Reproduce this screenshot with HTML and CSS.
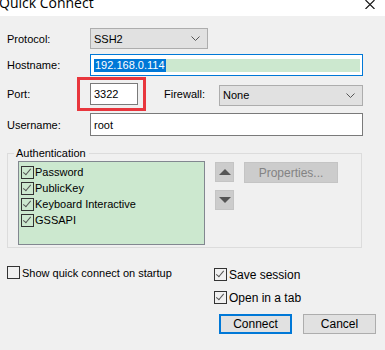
FILE: index.html
```html
<!DOCTYPE html>
<html lang="en">
<head>
    <meta charset="UTF-8">
    <title>Quick Connect</title>
    <link rel="stylesheet" href="styles.css">
</head>
<body>
    <div class="dialog">
        <div class="titlebar">
            <span class="title">Quick Connect</span>
            <svg class="close" width="10" height="9" viewBox="0 0 10 9">
                <path d="M0.5 0 L9.5 9 M9.5 0 L0.5 9" stroke="#111" stroke-width="1.1" fill="none"/>
            </svg>
        </div>

        <div class="form">
            <div class="row row-protocol">
                <label class="lbl">Protocol:</label>
                <div class="select select-protocol">
                    <span>SSH2</span>
                    <svg class="chev" width="9" height="5" viewBox="0 0 9 5"><path d="M0.5 0.5 L4.5 4.5 L8.5 0.5" stroke="#555" fill="none"/></svg>
                </div>
            </div>

            <div class="row row-host">
                <label class="lbl">Hostname:</label>
                <div class="input input-focus">
                    <span class="sel-text">192.168.0.114</span>
                    <span class="sel-fill"></span>
                </div>
            </div>

            <div class="row row-port">
                <label class="lbl">Port:</label>
                <div class="port-wrap">
                    <div class="input input-port">3322</div>
                    <div class="mark"></div>
                </div>
                <label class="lbl-fw">Firewall:</label>
                <div class="select select-fw">
                    <span>None</span>
                    <svg class="chev" width="9" height="5" viewBox="0 0 9 5"><path d="M0.5 0.5 L4.5 4.5 L8.5 0.5" stroke="#555" fill="none"/></svg>
                </div>
            </div>

            <div class="row row-user">
                <label class="lbl">Username:</label>
                <div class="input input-user">root</div>
            </div>
        </div>

        <fieldset class="auth">
            <legend>Authentication</legend>
            <div class="auth-body">
                <ul class="auth-list">
                    <li><span class="cb on"></span>Password</li>
                    <li><span class="cb on"></span>PublicKey</li>
                    <li><span class="cb on"></span>Keyboard Interactive</li>
                    <li><span class="cb on"></span>GSSAPI</li>
                </ul>
                <div class="arrows">
                    <div class="arrow-btn"><svg width="12" height="6" viewBox="0 0 12 6"><path d="M0 6 L6 0 L12 6 Z" fill="#555"/></svg></div>
                    <div class="arrow-btn"><svg width="12" height="6" viewBox="0 0 12 6"><path d="M0 0 L6 6 L12 0 Z" fill="#555"/></svg></div>
                </div>
                <div class="btn btn-disabled">Properties...</div>
            </div>
        </fieldset>

        <div class="bottom">
            <div class="check check-startup"><span class="cb"></span>Show quick connect on startup</div>
            <div class="right-col">
                <div class="check"><span class="cb on"></span>Save session</div>
                <div class="check check-tab"><span class="cb on"></span>Open in a tab</div>
                <div class="buttons">
                    <div class="btn btn-default">Connect</div>
                    <div class="btn">Cancel</div>
                </div>
            </div>
        </div>
    </div>
</body>
</html>
```

FILE: styles.css
```css
body {
    margin: 0;
    background: #f0f0f0;
    font-family: 'Liberation Sans', Arial, sans-serif;
    font-size: 11px;
    color: #000;
}

.dialog {
    width: 385px;
    height: 350px;
    overflow: hidden;
}

.titlebar {
    height: 16px;
    background: #fff;
    display: flex;
    justify-content: space-between;
    overflow: hidden;
}

.title {
    font-family: 'Open Sans', sans-serif;
    font-size: 14px;
    line-height: 15px;
    margin-top: -5px;
    margin-left: -1px;
}

.close {
    margin-right: 10px;
}

.form {
    padding: 12px 0 0 7px;
}

.row {
    display: flex;
    align-items: center;
}

.lbl {
    width: 83px;
}

.select {
    height: 21px;
    box-sizing: border-box;
    background: #e1e1e1;
    border: 1px solid #adadad;
    display: flex;
    align-items: center;
    justify-content: space-between;
    padding: 0 7px 0 3px;
}

.select-protocol {
    width: 118px;
}

.input {
    box-sizing: border-box;
    background: #fff;
    border: 1px solid #7a7a7a;
    display: flex;
    align-items: center;
    padding: 0 3px;
}

.row-host {
    margin-top: 5px;
}

.input-focus {
    width: 273px;
    height: 22px;
    border-color: #0078d7;
    padding: 0 2px 0 3px;
}

.sel-text {
    background: #0078d7;
    color: #fff;
    height: 13px;
    line-height: 13px;
    padding: 0 1px;
}

.sel-fill {
    flex: 1;
    height: 13px;
    background: #cce8cf;
}

.row-port {
    margin-top: 7px;
    height: 22px;
}

.port-wrap {
    position: relative;
    width: 48px;
    height: 22px;
}

.input-port {
    width: 48px;
    height: 22px;
}

/* red annotation box around the port field */
.mark {
    position: absolute;
    left: -13px;
    top: -6px;
    width: 63px;
    height: 28px;
    border: 3px solid #e8363d;
}

.lbl-fw {
    margin-left: 26px;
    width: 55px;
}

.select-fw {
    width: 144px;
    margin-top: 2px;
}

.row-user {
    margin-top: 8px;
}

.input-user {
    width: 273px;
    height: 23px;
}

.auth {
    margin: 11px 0 0 7px;
    padding: 0;
    width: 355px;
    height: 101px;
    box-sizing: border-box;
    border: 1px solid #dcdcdc;
}

.auth legend {
    margin-left: 6px;
    padding: 0 3px 0 2px;
    line-height: 12px;
}

.auth-body {
    display: flex;
    align-items: flex-start;
    padding: 2px 0 0 10px;
}

.auth-list {
    list-style: none;
    margin: 0;
    padding: 2px 0 0 2px;
    width: 187px;
    height: 84px;
    box-sizing: border-box;
    background: #cce8cf;
    border: 1px solid #828790;
}

.auth-list li {
    display: flex;
    align-items: center;
    height: 16px;
}

.cb {
    width: 13px;
    height: 13px;
    box-sizing: border-box;
    border: 1px solid #333;
    margin-right: 1px;
    flex: none;
    position: relative;
}

.cb.on::after {
    content: "";
    position: absolute;
    left: 3px;
    top: 0;
    width: 3px;
    height: 7px;
    border: solid #555;
    border-width: 0 1.5px 1.5px 0;
    transform: rotate(40deg);
}

.arrows {
    display: flex;
    flex-direction: column;
    gap: 8px;
    margin-left: 10px;
    margin-top: 1px;
}

.arrow-btn {
    width: 19px;
    height: 20px;
    box-sizing: border-box;
    background: #cccccc;
    border: 1px solid #c4c4c4;
    display: flex;
    align-items: center;
    justify-content: center;
}

.btn {
    width: 73px;
    height: 20px;
    box-sizing: border-box;
    background: #e1e1e1;
    border: 1px solid #adadad;
    display: flex;
    align-items: center;
    justify-content: center;
    font-size: 12px;
}

.btn-disabled {
    width: 94px;
    height: 21px;
    margin-left: 10px;
    margin-top: 1px;
    background: #cccccc;
    border-color: #c4c4c4;
    color: #838383;
}

.btn-default {
    border: 2px solid #0078d7;
}

.bottom {
    display: flex;
    padding: 18px 0 0 7px;
}

.check {
    display: flex;
    align-items: center;
    height: 13px;
    font-size: 12px;
}

.check .cb {
    margin-right: 2px;
}

.check-startup {
    width: 207px;
    font-size: 11px;
}

.right-col {
    margin-top: 2px;
}

.check-tab {
    margin-top: 10px;
}

.buttons {
    display: flex;
    gap: 11px;
    margin-top: 10px;
    margin-left: 5px;
}
```
